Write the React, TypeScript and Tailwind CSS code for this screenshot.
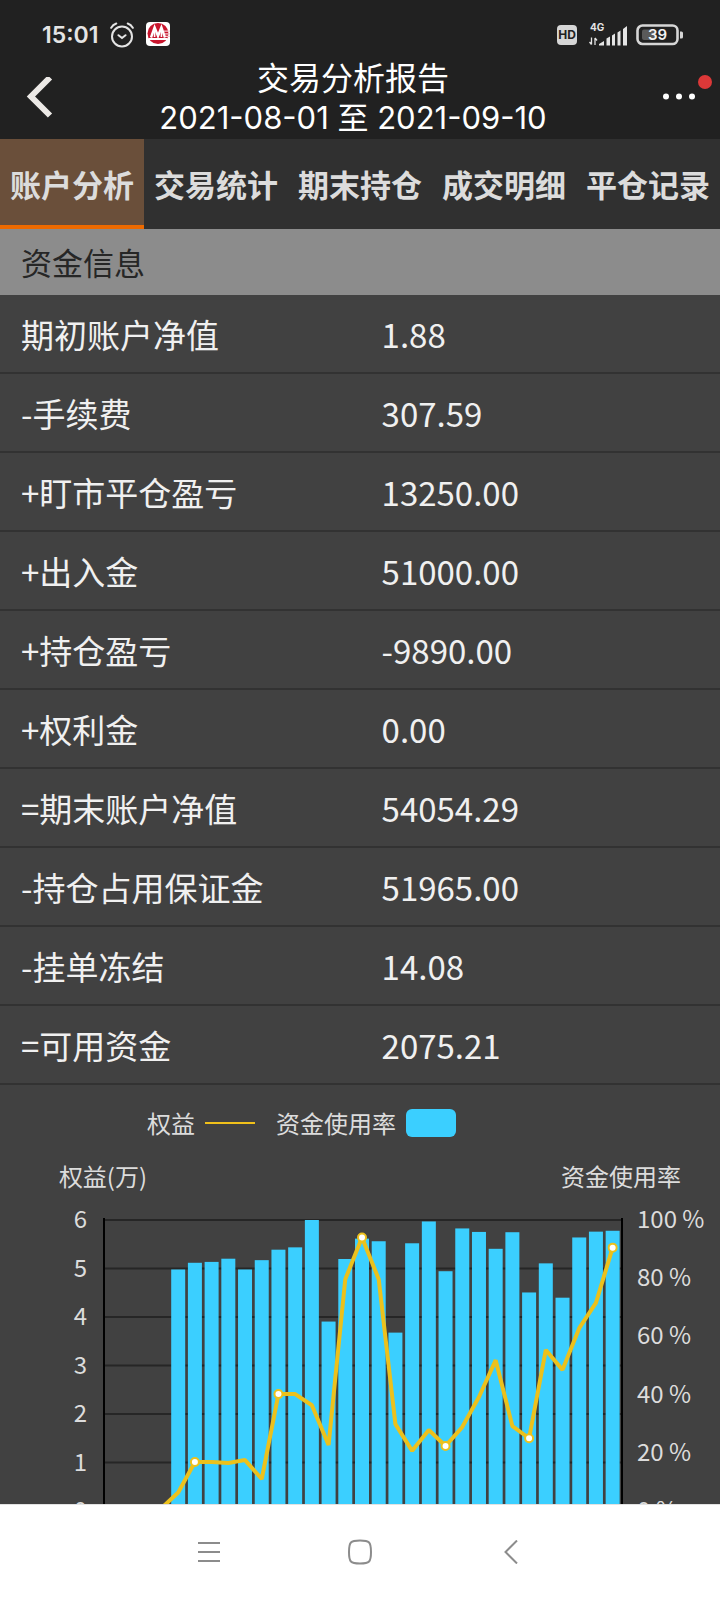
import React from 'react';

const CJK = "font-['Noto_Sans_CJK_SC',sans-serif]";
const HEAD = "font-['Inter','Noto_Sans_CJK_SC',sans-serif]";

const TABS = ['账户分析', '交易统计', '期末持仓', '成交明细', '平仓记录'];

const FUNDS = [
  { label: '期初账户净值', value: '1.88' },
  { label: '-手续费', value: '307.59' },
  { label: '+盯市平仓盈亏', value: '13250.00' },
  { label: '+出入金', value: '51000.00' },
  { label: '+持仓盈亏', value: '-9890.00' },
  { label: '+权利金', value: '0.00' },
  { label: '=期末账户净值', value: '54054.29' },
  { label: '-持仓占用保证金', value: '51965.00' },
  { label: '-挂单冻结', value: '14.08' },
  { label: '=可用资金', value: '2075.21' },
];

// usage rate in percent, one bar per trading day
const USAGE = [
  83, 85.3, 85.6, 86.7, 83, 86.2, 89.8, 90.6, 100, 65.1, 86.6, 93.6, 92.7, 61.3,
  92, 99.5, 82.4, 97.1, 95.9, 90.1, 95.8, 75.1, 85.1, 73.3, 94, 96, 96.3,
];

// equity in units of ten thousand, starts one day before the first bar
const EQUITY = [
  0.06, 0.38, 1.01, 1.01, 0.99, 1.05, 0.66, 2.41, 2.41, 2.18, 1.36, 4.78, 5.64,
  4.78, 1.79, 1.24, 1.67, 1.34, 1.73, 2.35, 3.11, 1.75, 1.5, 3.32, 2.91, 3.77,
  4.29, 5.43,
];

const LEFT = 104;
const RIGHT = 622;
const TOP = 75;
const BOTTOM = 366;
const STEP = (RIGHT - LEFT) / 31;

const slotX = (slot: number) => LEFT + STEP * (slot + 0.5) - 1;
const equityY = (v: number) => BOTTOM - ((BOTTOM - TOP) * v) / 6;
const usageY = (v: number) => BOTTOM - ((BOTTOM - TOP) * v) / 100;

const StatusBar: React.FC = () => (
  <div className="flex h-[60px] items-center justify-between pt-[10px] pl-[42px] pr-9 text-[#e4e4e4]">
    <div className="flex items-center gap-3">
      <span className="text-[23px] leading-6 font-semibold">15:01</span>
      <svg width="24" height="26" viewBox="0 0 24 26" fill="none" stroke="currentColor" strokeWidth="2" strokeLinecap="round">
        <circle cx="12" cy="14.5" r="10" />
        <path d="M8.5 13.2 12 16l3.500-2.800M1.200 5.800C2.300 3.800 4 2.300 6.300 1.500M22.800 5.800C21.700 3.800 20 2.300 17.700 1.500" />
      </svg>
      <svg width="24" height="26" viewBox="0 1 24 26">
        <rect width="24" height="24" y="1" rx="4" fill="#fff" />
        <circle cx="12" cy="12.500" r="10.500" fill="#c8152d" />
        <path d="M5 16.500 8.600 6.500 12 15l3.400-8.500L19 16.500" fill="none" stroke="#fff" strokeWidth="2.400" />
        <path d="M8.600 9v7M15.400 9v7" stroke="#fff" strokeWidth="1.600" />
        <path d="M2.500 18h19" stroke="#fff" strokeWidth="2" />
        <path d="M18 10.200h6M19 12.800h5M20 15.400h4" stroke="#f3c9cd" strokeWidth="1.300" />
      </svg>
    </div>
    <div className="flex items-center">
      <span className="flex h-5 w-5 items-center justify-center rounded bg-[#d6d6d6] text-xs leading-5 font-bold text-[#212121]">HD</span>
      <svg className="ml-3" width="39" height="32" viewBox="0 -5 39 32" fill="currentColor">
        <text x="1" y="7" fontSize="10" fontWeight="700">4G</text>
        <path d="M2.500 13.500v7M2.500 20.500.500 18M6 21v-7M6 14l2 2.500" stroke="currentColor" strokeWidth="1.300" fill="none" />
        <path d="M10 21.500V20l5-3v4.500zM17.500 21.500v-7l3.500-2v9zM23 21.500v-10l3-2v12zM28.500 21.500v-13l3-2v15zM34 21.500V5l4-3v19.500z" />
      </svg>
      <svg className="ml-2" width="48" height="22" viewBox="0 0 48 22">
        <rect x="1.500" y="1.500" width="40" height="18.500" rx="5" fill="none" stroke="#d6d6d6" strokeWidth="2.600" />
        <rect x="6" y="5.500" width="13" height="10.500" rx="2" fill="#5a5a5a" />
        <path d="M44 7.500h1.500q1.500 0 1.500 1.500v4q0 1.500-1.500 1.500H44z" fill="#d6d6d6" />
        <text x="21.500" y="16" fontSize="15" fontWeight="600" fill="#f2f2f2" textAnchor="middle">39</text>
      </svg>
    </div>
  </div>
);

const Header: React.FC = () => (
  <header className={`bg-[#212121] ${HEAD}`}>
    <StatusBar />
    <div className="relative flex h-[79px] items-center justify-between pb-1 pl-[26px] pr-6 text-white">
      <button aria-label="返回" className="w-10">
        <svg width="28" height="42" viewBox="0 0 28 42" fill="none" stroke="#ece9e6" strokeWidth="6">
          <path d="M24 .500 5 19.500l19 19" />
        </svg>
      </button>
      <h1 className="text-center font-normal">
        <span className="block text-[32px] leading-[39px]">交易分析报告</span>
        <span className="block text-[31px] leading-[39px]">2021-08-01 至 2021-09-10</span>
      </h1>
      <button aria-label="更多" className="w-14">
        <svg width="56" height="42" viewBox="0 0 56 42" fill="#fff">
          <circle cx="26" cy="19.500" r="3" />
          <circle cx="39" cy="19.500" r="3" />
          <circle cx="52" cy="19.500" r="3" />
        </svg>
      </button>
      <span className="absolute top-[15px] right-2 h-[14px] w-[14px] rounded-full bg-[#dc3838]" />
    </div>
  </header>
);

const Tabs: React.FC = () => (
  <nav className="grid h-[90px] grid-cols-5 bg-[#303030]">
    {TABS.map((tab, i) => (
      <button
        key={tab}
        className={`border-b-4 pt-1 text-[31px] leading-10 font-bold whitespace-nowrap text-[#dcdcdc] ${
          i === 0 ? 'border-[#ee6a00] bg-[#6a4f3a]' : 'border-transparent'
        }`}
      >
        {tab}
      </button>
    ))}
  </nav>
);

const FundTable: React.FC = () => (
  <table className="w-full table-fixed border-separate border-spacing-0 text-left text-[33px] leading-10 text-[#f0f0f0]">
    <tbody>
      {FUNDS.map((row) => (
        <tr key={row.label} className="h-[79px]">
          <th scope="row" className="w-[53%] border-b-2 border-[#323232] pl-[21px] font-normal">{row.label}</th>
          <td className="border-b-2 border-[#323232]">{row.value}</td>
        </tr>
      ))}
    </tbody>
  </table>
);

const Chart: React.FC = () => (
  <section className="pt-5">
    <div className="flex items-center pl-[147px] text-2xl leading-9 text-[#dcdcdc]">
      <span>权益</span>
      <span className="ml-[10px] h-[2px] w-[50px] bg-[#f0c01a]" />
      <span className="ml-[21px]">资金使用率</span>
      <span className="ml-[10px] h-7 w-[50px] rounded-md bg-[#3bcfff]" />
    </div>
    <svg className="mt-1 block w-full" viewBox="0 0 720 400" fontSize="24" fill="#dcdcdc">
      <text x="103" y="41" textAnchor="middle">权益(万)</text>
      <text x="621" y="41" textAnchor="middle">资金使用率</text>
      {[0, 1, 2, 3, 4, 5, 6].map((v) => (
        <g key={v}>
          <path d={`M${LEFT} ${equityY(v)}H${RIGHT}`} stroke="#262626" strokeWidth="2" />
          <text x="87" y={equityY(v) + 8} textAnchor="end">{v}</text>
        </g>
      ))}
      {[0, 20, 40, 60, 80, 100].map((v) => (
        <text key={v} x="637" y={usageY(v) + 8}>{v} %</text>
      ))}
      {USAGE.map((v, i) => (
        <rect key={i} x={slotX(i + 4) - 7} y={usageY(v)} width="14" height={BOTTOM - usageY(v)} fill="#3bcfff" />
      ))}
      <path d={`M${LEFT} ${TOP - 2}V${BOTTOM}M${RIGHT} ${TOP - 2}V${BOTTOM}`} stroke="#000" strokeWidth="2" />
      <polyline
        points={EQUITY.map((v, i) => `${slotX(i + 3)},${equityY(v)}`).join(' ')}
        fill="none"
        stroke="#ecc11c"
        strokeWidth="4"
        strokeLinejoin="bevel"
      />
      {EQUITY.map((v, i) =>
        i % 5 === 2 ? (
          <circle key={i} cx={slotX(i + 3)} cy={equityY(v)} r="4" fill="#fff" stroke="#ecc11c" strokeWidth="2" />
        ) : null
      )}
    </svg>
  </section>
);

const SystemNav: React.FC = () => (
  <nav className="flex h-24 shrink-0 items-center justify-center gap-[78px] border-t border-[#e2e2e2] bg-white pb-0.5">
    <button aria-label="菜单" className="p-6">
      <svg width="24" height="24" viewBox="0 0 24 24" stroke="#8c8c8c" strokeWidth="2">
        <path d="M1 3h22M1 12h22M1 21h22" />
      </svg>
    </button>
    <button aria-label="主页" className="p-6">
      <svg width="26" height="26" viewBox="0 0 26 26" fill="none" stroke="#8c8c8c" strokeWidth="2">
        <path d="M13 1.500c9.500 0 11 1.500 11 11.500s-1.500 11.500-11 11.500S2 23 2 13 3.500 1.500 13 1.500z" />
      </svg>
    </button>
    <button aria-label="后退" className="p-6">
      <svg width="24" height="24" viewBox="0 0 24 24" fill="none" stroke="#8c8c8c" strokeWidth="2">
        <path d="M18 .500 6.500 12 18 23.500" />
      </svg>
    </button>
  </nav>
);

export default function App() {
  return (
    <div className={`flex h-screen flex-col bg-[#414141] ${CJK}`}>
      <Header />
      <Tabs />
      <main className="min-h-0 flex-1 overflow-y-auto [scrollbar-width:none]">
        <h2 className="bg-[#8c8c8c] py-[13px] pl-[21px] text-[31px] leading-10 font-normal text-[#262626]">资金信息</h2>
        <FundTable />
        <Chart />
      </main>
      <SystemNav />
    </div>
  );
}
